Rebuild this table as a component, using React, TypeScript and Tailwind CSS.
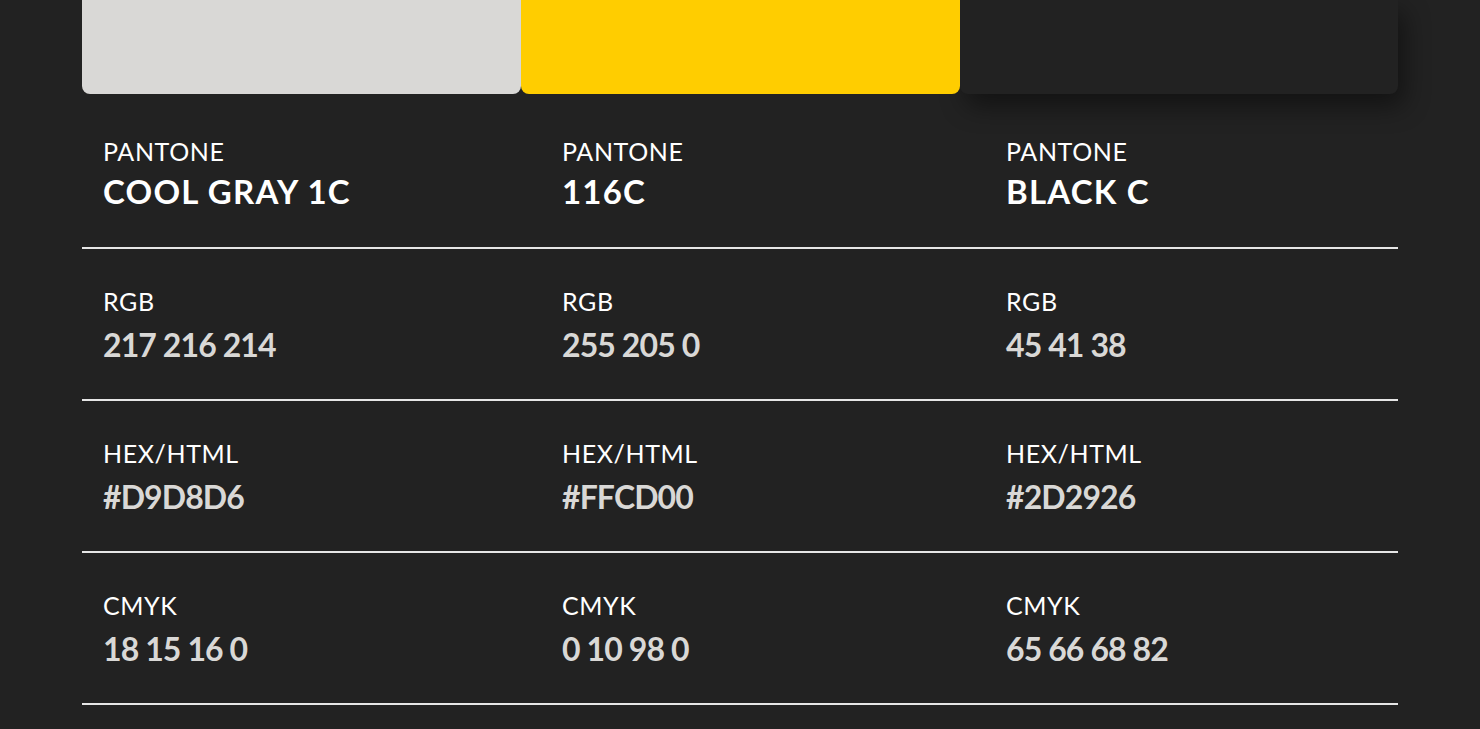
const colors = [
  { swatch: 'bg-[#d9d8d6]', pantone: 'COOL GRAY 1C', rgb: '217 216 214', hex: '#D9D8D6', cmyk: '18 15 16 0' },
  { swatch: 'bg-[#ffcd00] relative z-10', pantone: '116C', rgb: '255 205 0', hex: '#FFCD00', cmyk: '0 10 98 0' },
  { swatch: 'bg-[#222222] shadow-[6px_12px_26px_rgba(0,0,0,0.45)]', pantone: 'BLACK C', rgb: '45 41 38', hex: '#2D2926', cmyk: '65 66 68 82' },
]

const rows = [
  { label: 'PANTONE', key: 'pantone' },
  { label: 'RGB', key: 'rgb' },
  { label: 'HEX/HTML', key: 'hex' },
  { label: 'CMYK', key: 'cmyk' },
] as const

export default function App() {
  return (
    <div className="min-h-screen bg-[#222222] font-['Lato',sans-serif] overflow-hidden">
      <div className="w-[1316px] mx-auto">
        <div className="grid grid-cols-[439px_439px_438px] h-[94px]">
          {colors.map((c, i) => (
            <div key={i} className={`rounded-b-lg ${c.swatch}`} />
          ))}
        </div>

        {rows.map((row, r) => (
          <div key={row.key}>
            <div className={`grid grid-cols-[459px_444px_413px] ${r === 0 ? 'h-[153px] pt-[45px]' : 'h-[150px] pt-[40px]'}`}>
              {colors.map((c, i) => (
                <div key={i} className="pl-[21px]">
                  <div className="text-[25px] leading-[25px] tracking-[0.6px] text-white">{row.label}</div>
                  {r === 0 ? (
                    <div className="mt-[11px] text-[33px] leading-[33px] font-bold tracking-[1.2px] text-white">{c[row.key]}</div>
                  ) : (
                    <div className="mt-[15px] text-[32px] leading-[32px] font-bold tracking-[-0.9px] text-[#d9d8d6]">{c[row.key]}</div>
                  )}
                </div>
              ))}
            </div>
            <div className="h-[2px] bg-[#e6e6e6]" />
          </div>
        ))}
      </div>
    </div>
  )
}
